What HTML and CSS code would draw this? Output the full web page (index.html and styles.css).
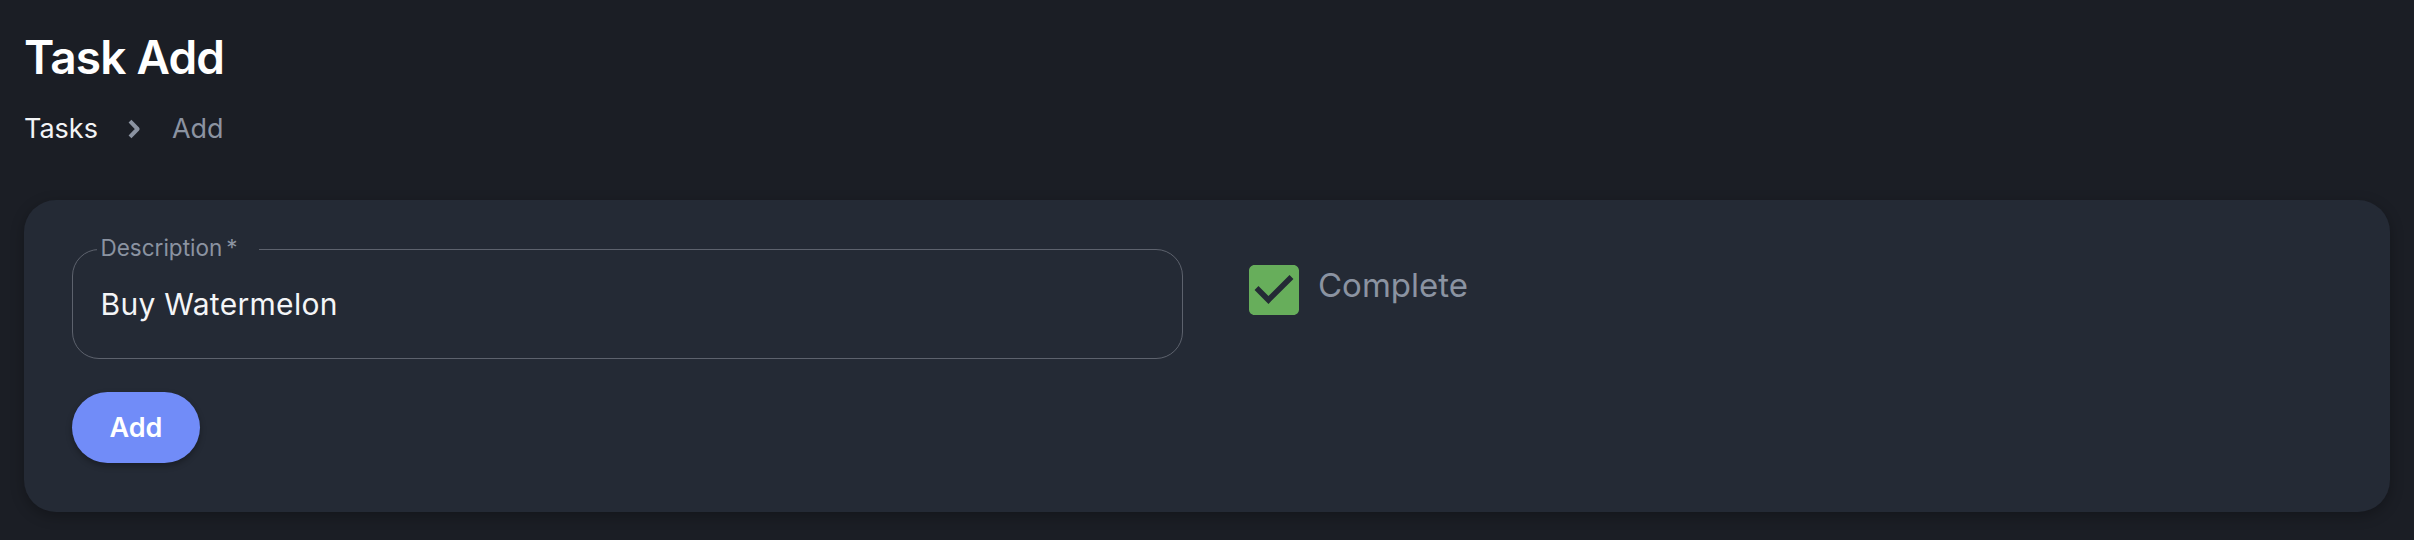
FILE: index.html
```html
<!DOCTYPE html>
<html lang="en">
<head>
<meta charset="utf-8">
<title>Task Add</title>
<link rel="stylesheet" href="styles.css">
</head>
<body>
<div class="page">
  <h1 class="title">Task Add</h1>
  <nav class="crumbs">
    <span class="crumb-link">Tasks</span>
    <svg class="crumb-sep" viewBox="0 0 16 20" width="16" height="20"><polyline points="4,2.2 11.6,10 4,17.8"/></svg>
    <span class="crumb-current">Add</span>
  </nav>
  <section class="card">
    <div class="row">
      <div class="field">
        <span class="field-label">Description&thinsp;*</span>
        <span class="field-value">Buy Watermelon</span>
      </div>
      <label class="check">
        <svg class="check-box" viewBox="3 3 18 18" width="50" height="50"><path d="M19 3H5c-1.11 0-2 .9-2 2v14c0 1.1.89 2 2 2h14c1.11 0 2-.9 2-2V5c0-1.1-.89-2-2-2zm-9 14l-5-5 1.41-1.41L10 14.17l7.59-7.59L19 8l-9 9z"/></svg>
        <span class="check-label">Complete</span>
      </label>
    </div>
    <button class="btn">Add</button>
  </section>
</div>
</body>
</html>
```

FILE: styles.css
```css
* { box-sizing: border-box; }
html, body {
  margin: 0;
  background: #1b1e25;
  font-family: Inter, "Noto Sans", "Liberation Sans", sans-serif;
}
.page {
  padding: 30px 24px 28px;
}
.title {
  margin: 0;
  font-size: 46px;
  line-height: 55px;
  font-weight: 600;
  color: #ffffff;
  letter-spacing: -0.8px;
}
.crumbs {
  margin-top: 28px;
  display: flex;
  align-items: center;
  height: 32px;
  font-size: 27px;
  line-height: 32px;
}
.crumb-link { color: #f3f4f6; }
.crumb-sep {
  fill: none;
  stroke: #8b93a1;
  stroke-width: 4;
  stroke-linejoin: round;
  margin: 0 30px 0 28px;
}
.crumb-current { color: #8b93a1; }
.card {
  margin-top: 55px;
  background: #242a35;
  border-radius: 32px;
  padding: 49px 48px;
  box-shadow: 0 4px 14px rgba(0, 0, 0, 0.28);
}
.row {
  display: flex;
  align-items: flex-start;
}
.field {
  position: relative;
  width: 1111px;
  height: 110px;
  border: 1.5px solid #5d626d;
  border-radius: 27px;
  display: flex;
  align-items: center;
  padding-left: 27.5px;
}
.field-label {
  position: absolute;
  left: 23.5px;
  top: -14px;
  padding: 0 21px 0 4px;
  background: #242a35;
  color: #8b93a1;
  font-size: 22.5px;
  line-height: 24px;
}
.field-value {
  color: #f4f5f7;
  font-size: 30px;
  line-height: 36px;
  letter-spacing: 0.3px;
}
.check {
  display: flex;
  align-items: flex-start;
  margin-left: 66px;
  padding-top: 16px;
}
.check-box {
  display: block;
  fill: #67ae5b;
}
.check-label {
  margin-left: 19px;
  color: #8b93a1;
  font-size: 33px;
  line-height: 40px;
}
.btn {
  display: block;
  margin-top: 33px;
  width: 128px;
  height: 71px;
  border: none;
  border-radius: 36px;
  background: #718cf8;
  color: #ffffff;
  font-family: inherit;
  font-size: 27px;
  font-weight: 600;
  box-shadow: 0 3px 6px rgba(0, 0, 0, 0.3);
  padding: 0;
}
```
